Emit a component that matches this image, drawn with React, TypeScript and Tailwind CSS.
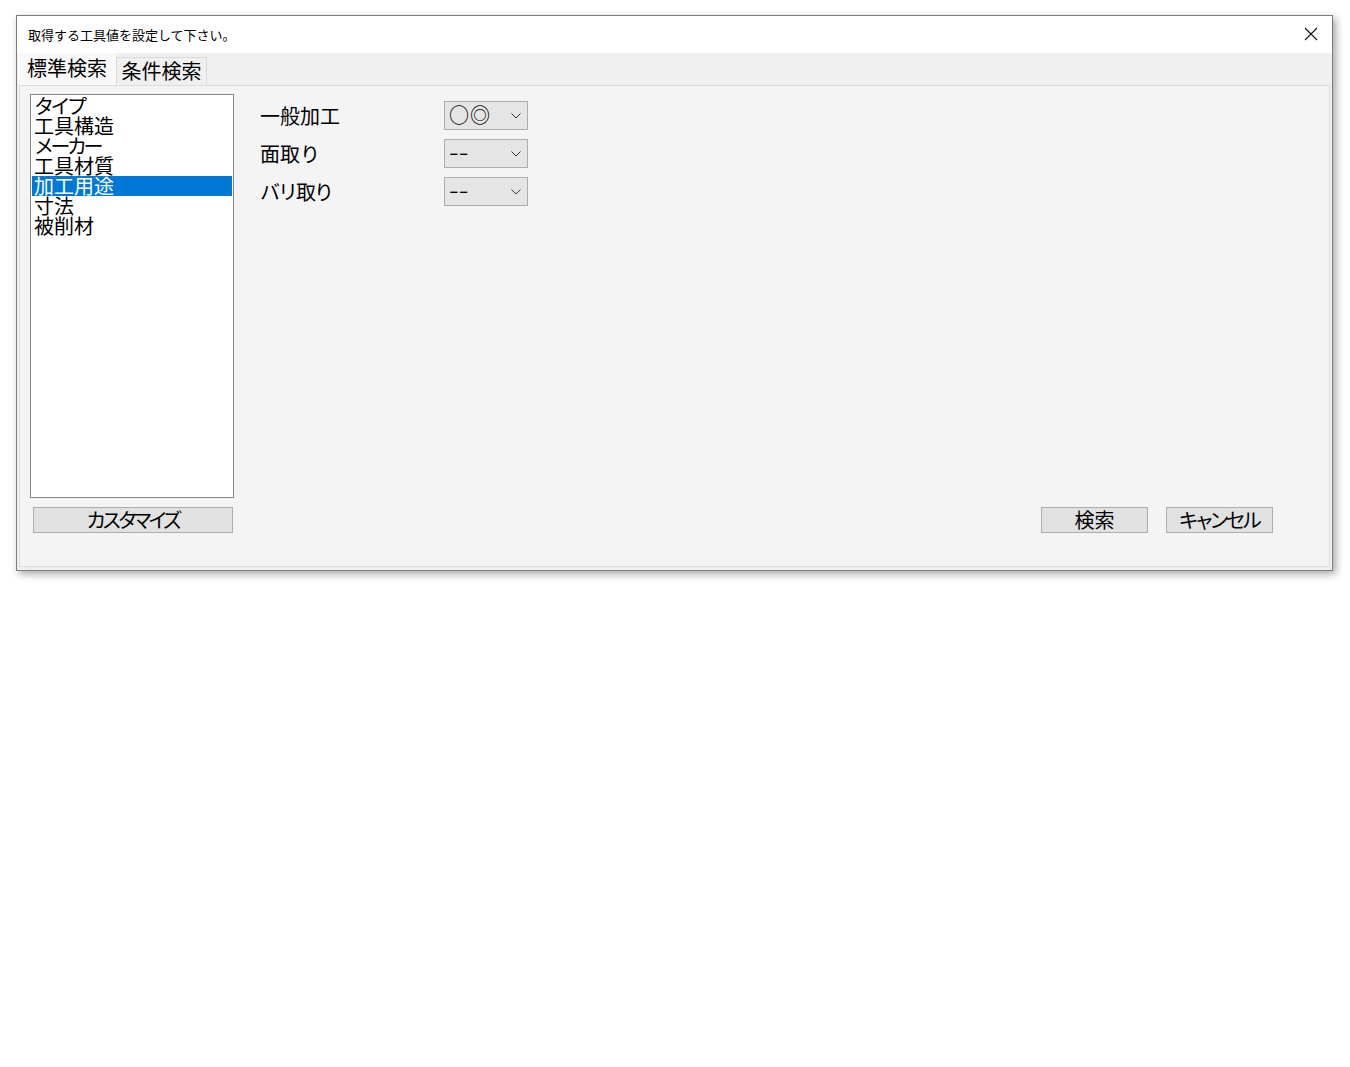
import React from 'react';

const jp = "font-['Noto_Sans_CJK_JP','Noto_Sans',sans-serif]";

const items = [
  { t: 'タイプ', kana: true },
  { t: '工具構造', kana: false },
  { t: 'メーカー', kana: true },
  { t: '工具材質', kana: false },
  { t: '加工用途', kana: false },
  { t: '寸法', kana: false },
  { t: '被削材', kana: false },
];

const rows = [
  { label: '一般加工', value: '○◎', kana: false },
  { label: '面取り', value: '--', kana: false },
  { label: 'バリ取り', value: '--', kana: true },
];

function Chevron() {
  return (
    <svg viewBox="0 0 10 6" className="h-[6px] w-[10px]" fill="none" stroke="#333" strokeWidth="1">
      <path d="M0.5 0.5 L5 5 L9.5 0.5" />
    </svg>
  );
}

function Combo({ value }: { value: string }) {
  const isDash = value === '--';
  return (
    <div className="flex h-[29px] w-[84px] items-center justify-between border border-[#adadad] bg-[#e5e5e5] pl-[4px] pr-[6px]">
      <span
        className={`leading-none text-black ${
          isDash ? 'mb-[3px] origin-left text-[20px] [transform:scaleX(1.4)]' : 'mb-[2px] text-[20px] tracking-[1px]'
        }`}
      >
        {value}
      </span>
      <Chevron />
    </div>
  );
}

function Button({ label, className }: { label: string; className: string }) {
  return (
    <button
      type="button"
      className={`flex h-[26px] items-center justify-center border border-[#adadad] bg-[#e1e1e1] text-[20px] leading-none text-black [font-feature-settings:'palt'] ${className}`}
    >
      {label}
    </button>
  );
}

export default function App() {
  return (
    <div className={`min-h-[1067px] bg-white pl-[16px] pt-[15px] ${jp}`}>
      <div className="w-[1317px] border border-[#7b7b82] bg-[#f0f0f0] shadow-[3px_3px_8px_rgba(0,0,0,0.35)]">
        {/* title bar */}
        <div className="flex h-[37px] items-center justify-between bg-white pb-[1px] pl-[11px] pr-[14px]">
          <span className="text-[13px] leading-none text-black">取得する工具値を設定して下さい。</span>
          <svg viewBox="0 0 14 14" className="h-[14px] w-[14px]" stroke="#111" strokeWidth="1.1">
            <path d="M1 1 L13 13 M13 1 L1 13" />
          </svg>
        </div>

        {/* tabs */}
        <div className="flex h-[32px] items-end pl-[1px]">
          <div className="flex h-[32px] w-[98px] items-center justify-center bg-[#f9f9f9] pb-[2px] text-[20px] leading-none text-black">
            標準検索
          </div>
          <div className="mb-[1px] flex h-[27px] w-[91px] items-center justify-center border border-b-0 border-[#d9d9d9] bg-[#f0f0f0] text-[20px] leading-none text-black">
            条件検索
          </div>
        </div>

        {/* panel */}
        <div className="mx-[2px] mb-[3px] flex h-[482px] flex-col border border-[#dcdcdc] bg-[#f4f4f4] pl-[10px] pr-[56px] pt-[8px]">
          <div className="flex">
            <div className="h-[404px] w-[204px] border border-[#828790] bg-white p-[1px]">
              {items.map((it) => (
                <div
                  key={it.t}
                  className={`h-[20px] pl-[2px] text-[20px] leading-[20px] ${it.kana ? 'tracking-[-3.5px]' : ''} ${
                    it.t === '加工用途' ? 'bg-[#0078d7] text-white' : 'text-black'
                  }`}
                >
                  {it.t}
                </div>
              ))}
            </div>
            <div className="ml-[26px] mt-[7px] flex flex-col gap-[9px]">
              {rows.map((r) => (
                <div key={r.label} className="flex items-center">
                  <span className={`w-[184px] text-[20px] leading-none text-black ${r.kana ? 'tracking-[-2px]' : ''}`}>
                    {r.label}
                  </span>
                  <Combo value={r.value} />
                </div>
              ))}
            </div>
          </div>

          <div className="mt-[9px] flex items-center">
            <Button label="カスタマイズ" className="ml-[3px] w-[200px] tracking-[-2.5px]" />
            <div className="ml-auto flex gap-[18px]">
              <Button label="検索" className="w-[107px]" />
              <Button label="キャンセル" className="w-[107px] tracking-[-2px]" />
            </div>
          </div>
        </div>
      </div>
    </div>
  );
}
